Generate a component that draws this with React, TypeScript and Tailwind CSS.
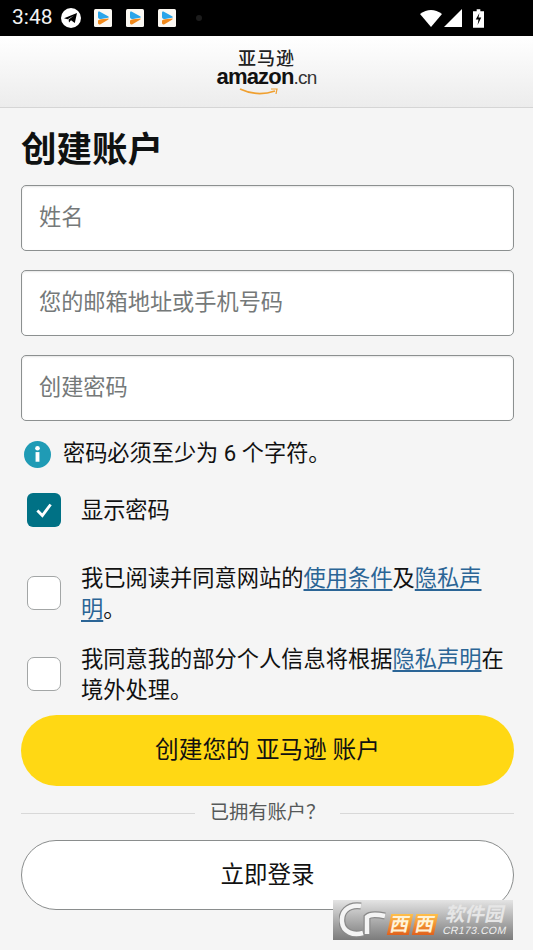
import React from 'react';

const cjk = "font-['Roboto','Noto_Sans_CJK_SC',sans-serif]";

const AppIcon = () => (
  <svg viewBox="0 0 18 18" className="w-[18px] h-[18px]">
    <rect width="18" height="18" rx="1.5" fill="#fbf8f2" />
    <path d="M4 3.5 Q4 2 5.5 2.6 L14.5 7.6 Q15.6 8.4 14 8.8 L7 10 Q4 10 4 8 Z" fill="#2aa5ea" />
    <path d="M4 11.5 Q5 10.5 7 10.3 L14.4 9.4 Q15.4 9.8 14 10.8 L6.5 15.2 Q4 16 4 14 Z" fill="#f28a1c" />
  </svg>
);

const Field = ({ placeholder }: { placeholder: string }) => (
  <div className="h-[66px] bg-white border border-[#8c9090] rounded-[5px] shadow-[inset_0_1px_2px_rgba(0,0,0,0.1)] flex items-center pl-[17px] text-[22.2px] text-[#757979]">
    {placeholder}
  </div>
);

const Box = () => (
  <div className="w-[34px] h-[34px] -mt-[2px] shrink-0 bg-white border-[1.5px] border-[#a3a6a6] rounded-[7px]" />
);

const Link = ({ children }: { children: React.ReactNode }) => (
  <span className="text-[#2b6596] underline underline-offset-[3px] decoration-[1.5px]">{children}</span>
);

export default function App() {
  return (
    <div className={`w-[533px] h-[950px] overflow-hidden bg-[#f5f5f5] relative ${cjk}`}>
      {/* Status bar */}
      <div className="h-[36px] bg-black flex items-center pl-3 pr-[49px]">
        <span className="text-[#f2f2f2] text-[21px] w-[49px]">3:48</span>
        <svg viewBox="0 0 20 20" className="w-[20px] h-[20px] mr-[13px]">
          <circle cx="10" cy="10" r="10" fill="#fff" />
          <path d="M3 10.2 L16 5 L13.8 15 L10 12.3 L8 14.6 L7.6 11.6 L13 7.4 L6.6 11.2 Z" fill="#000" />
        </svg>
        <div className="flex gap-[14px]">
          <AppIcon />
          <AppIcon />
          <AppIcon />
        </div>
        <div className="w-[6px] h-[6px] rounded-full bg-[#1c1c1c] ml-[20px]" />
        <div className="flex-1" />
        <svg viewBox="0 0 22 18" className="w-[22px] h-[18px] mr-[2px]">
          <path d="M0 5 Q11 -3 22 5 L11 18 Z" fill="#fff" />
        </svg>
        <svg viewBox="0 0 18 18" className="w-[18px] h-[18px] mr-[11px]">
          <path d="M18 0 V18 H0 Z" fill="#fff" />
        </svg>
        <svg viewBox="0 0 12 20" className="w-[11px] h-[19px]">
          <path d="M4 0 H8 V2 H12 V20 H0 V2 H4 Z" fill="#fff" />
          <path d="M7 4 L3 11 H6 L5 17 L9 9 H6 Z" fill="#000" />
        </svg>
      </div>

      {/* Header */}
      <div className="h-[72px] bg-gradient-to-b from-white to-[#ececec] border-b border-[#d5d5d5] flex flex-col items-center justify-center">
        <div className="text-[18px] leading-[18px] font-medium text-[#222] tracking-[1px] mt-[2px]">亚马逊</div>
        <div className="flex items-baseline leading-[20px] -mt-[1px]">
          <span className="font-['Liberation_Sans'] font-bold text-[22px] tracking-[-0.8px] text-[#111]">amazon</span>
          <span className="font-['Liberation_Sans'] text-[19px] tracking-[-0.8px] text-[#333]">.cn</span>
        </div>
        <svg viewBox="0 0 42 8" className="w-[42px] h-[8px] -ml-[14px]">
          <path d="M1 1 Q18 9 36 3" stroke="#f0a030" strokeWidth="1.8" fill="none" />
          <path d="M32 1 L38 1 L37 6" stroke="#f0a030" strokeWidth="1.2" fill="none" />
        </svg>
      </div>

      {/* Form */}
      <div className="pl-[21px] pr-[19px]">
        <h1 className="text-[35.5px] leading-[46px] font-bold text-[#0f1111] mt-[19px]">创建账户</h1>
        <div className="flex flex-col gap-[19px] mt-[12px]">
          <Field placeholder="姓名" />
          <Field placeholder="您的邮箱地址或手机号码" />
          <Field placeholder="创建密码" />
        </div>

        <div className="flex items-center mt-[19px] ml-[3px] h-[28px]">
          <svg viewBox="0 0 28 28" className="w-[27px] h-[27px] mr-[12px]">
            <circle cx="14" cy="14" r="14" fill="#1f9bb5" />
            <rect x="12" y="11.5" width="4" height="10" fill="#fff" />
            <circle cx="14" cy="7.5" r="2.4" fill="#fff" />
          </svg>
          <span className="text-[22.2px] text-[#111]">密码必须至少为 6 个字符。</span>
        </div>

        <div className="flex items-center mt-[25px] ml-[6px]">
          <div className="w-[34px] h-[34px] bg-[#007185] rounded-[6px] flex items-center justify-center mr-[20px]">
            <svg viewBox="0 0 20 20" className="w-[22px] h-[22px]">
              <path d="M4 10.5 L8.5 15 L16 5" stroke="#fff" strokeWidth="2.6" fill="none" />
            </svg>
          </div>
          <span className="text-[22.2px] text-[#111] mt-[1px]">显示密码</span>
        </div>

        <div className="flex items-center mt-[36px] ml-[6px] text-[22.25px] leading-[31px] text-[#111]">
          <Box />
          <div className="ml-[20px]">
            我已阅读并同意网站的<Link>使用条件</Link>及<Link>隐私声明</Link>。
          </div>
        </div>

        <div className="flex items-center mt-[19px] ml-[6px] text-[22.25px] leading-[31px] text-[#111]">
          <Box />
          <div className="ml-[20px]">
            我同意我的部分个人信息将根据<Link>隐私声明</Link>在境外处理。
          </div>
        </div>

        <div className="h-[71px] mt-[9px] rounded-full bg-[#ffd814] flex items-center justify-center text-[23.7px] text-[#111]">
          创建您的 亚马逊 账户
        </div>

        <div className="flex items-center mt-[14px] h-[27px]">
          <div className="flex-1 h-px bg-[#d8d8d8]" />
          <span className="px-[15px] text-[19.3px] text-[#565959]">已拥有账户？</span>
          <div className="flex-1 h-px bg-[#d8d8d8]" />
        </div>

        <div className="h-[70px] mt-[13px] rounded-full bg-white border-[1.5px] border-[#8a8d8d] flex items-center justify-center text-[23.5px] text-[#111]">
          立即登录
        </div>
      </div>

      {/* Watermark */}
      <div className="absolute left-[333px] top-[900px] w-[180px] h-[40px] bg-gradient-to-b from-[#e4e4e4] to-[#7c7c7c] flex items-center pl-[6px]">
        <svg viewBox="0 0 50 38" className="w-[50px] h-[38px] shrink-0">
          <path d="M22 5 C8 3 2 12 3 21 C4 31 14 35 24 32" stroke="#8a8a8a" strokeWidth="7" fill="none" />
          <path d="M22 5 C8 3 2 12 3 21 C4 31 14 35 24 32" stroke="#f4f4f4" strokeWidth="4.5" fill="none" />
          <path d="M28 33 V16 Q32 12 46 15" stroke="#8a8a8a" strokeWidth="7" fill="none" />
          <path d="M28 33 V16 Q32 12 46 15" stroke="#f4f4f4" strokeWidth="4.5" fill="none" />
        </svg>
        <div className="flex gap-[3px] -skew-x-12 mt-[8px]">
          <span className="w-[22px] h-[21px] bg-gradient-to-b from-[#ffc04a] to-[#e0601c] text-[#fff3d8] text-[19px] leading-[21px] font-bold text-center">西</span>
          <span className="w-[22px] h-[21px] bg-gradient-to-b from-[#ffc04a] to-[#e0601c] text-[#fff3d8] text-[19px] leading-[21px] font-bold text-center">西</span>
        </div>
        <div className="ml-[9px] flex flex-col items-start -skew-x-12">
          <span className="text-[19.5px] leading-[20px] font-bold text-[#e6e6e6]">软件园</span>
          <span className="font-['Liberation_Sans'] text-[10.5px] leading-[11px] tracking-[0.4px] text-[#eeeeee]">CR173.COM</span>
        </div>
      </div>
    </div>
  );
}
